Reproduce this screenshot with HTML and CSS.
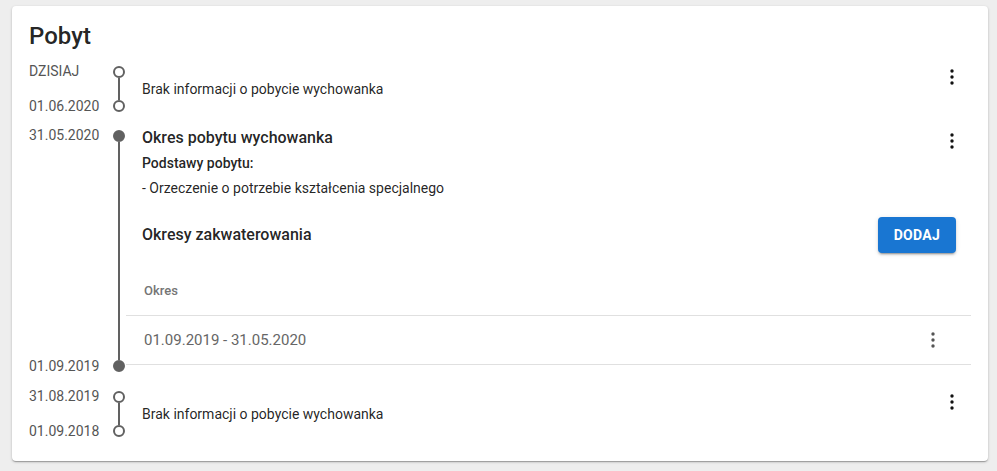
FILE: index.html
```html
<!DOCTYPE html>
<html lang="pl">
<head>
  <meta charset="UTF-8" />
  <meta name="viewport" content="width=device-width, initial-scale=1.0"/>
  <title>Pobyt</title>
  <link rel="stylesheet" href="styles.css">
</head>
<body>
  <div class="card">
    <h1 class="card-title">Pobyt</h1>

    <!-- brak informacji: dzisiaj - 01.06.2020 -->
    <div class="entry">
      <div class="dates">
        <span>DZISIAJ</span>
        <span>01.06.2020</span>
      </div>
      <div class="rail">
        <span class="dot"></span>
        <span class="line"></span>
        <span class="dot"></span>
      </div>
      <div class="content empty">
        <span class="empty-text">Brak informacji o pobycie wychowanka</span>
        <button class="kebab">
          <svg viewBox="0 0 24 24" width="24" height="24"><circle cx="12" cy="6" r="1.7"/><circle cx="12" cy="12" r="1.7"/><circle cx="12" cy="18" r="1.7"/></svg>
        </button>
      </div>
    </div>

    <!-- okres pobytu -->
    <div class="entry stay-entry">
      <div class="dates">
        <span>31.05.2020</span>
        <span>01.09.2019</span>
      </div>
      <div class="rail">
        <span class="dot filled"></span>
        <span class="line"></span>
        <span class="dot filled"></span>
      </div>
      <div class="content stay">
        <div class="stay-head">
          <div class="stay-info">
            <h3 class="stay-title">Okres pobytu wychowanka</h3>
            <div class="stay-label">Podstawy pobytu:</div>
            <div class="stay-text">- Orzeczenie o potrzebie kształcenia specjalnego</div>
          </div>
          <button class="kebab">
            <svg viewBox="0 0 24 24" width="24" height="24"><circle cx="12" cy="6" r="1.7"/><circle cx="12" cy="12" r="1.7"/><circle cx="12" cy="18" r="1.7"/></svg>
          </button>
        </div>

        <div class="toolbar">
          <h4>Okresy zakwaterowania</h4>
          <button class="btn-add">Dodaj</button>
        </div>

        <table class="periods">
          <thead>
            <tr><th>Okres</th><th></th></tr>
          </thead>
          <tbody>
            <tr>
              <td>01.09.2019 - 31.05.2020</td>
              <td class="actions">
                <button class="kebab grey">
                  <svg viewBox="0 0 24 24" width="24" height="24"><circle cx="12" cy="6" r="1.7"/><circle cx="12" cy="12" r="1.7"/><circle cx="12" cy="18" r="1.7"/></svg>
                </button>
              </td>
            </tr>
          </tbody>
        </table>
      </div>
    </div>

    <!-- brak informacji: 31.08.2019 - 01.09.2018 -->
    <div class="entry">
      <div class="dates">
        <span>31.08.2019</span>
        <span>01.09.2018</span>
      </div>
      <div class="rail">
        <span class="dot"></span>
        <span class="line"></span>
        <span class="dot"></span>
      </div>
      <div class="content empty">
        <span class="empty-text">Brak informacji o pobycie wychowanka</span>
        <button class="kebab">
          <svg viewBox="0 0 24 24" width="24" height="24"><circle cx="12" cy="6" r="1.7"/><circle cx="12" cy="12" r="1.7"/><circle cx="12" cy="18" r="1.7"/></svg>
        </button>
      </div>
    </div>
  </div>
</body>
</html>
```

FILE: styles.css
```css
body {
  margin: 0;
  padding: 6px 9px 10px 12px;
  font-family: Roboto, 'Liberation Sans', sans-serif;
  background: #eeeeee;
  color: rgba(0, 0, 0, 0.87);
}

.card {
  background: #fff;
  border-radius: 4px;
  box-shadow: 0 1px 3px rgba(0, 0, 0, 0.2), 0 1px 1px rgba(0, 0, 0, 0.14), 0 2px 1px -1px rgba(0, 0, 0, 0.12);
  padding: 14px 17px 24px 17px;
  height: 455px;
  box-sizing: border-box;
}

.card-title {
  margin: 0 0 14px;
  font-size: 24px;
  font-weight: 500;
  line-height: 32px;
}

.entry {
  display: flex;
  margin-bottom: 18px;
}

.entry.stay-entry {
  margin-bottom: 19px;
}

.entry:last-child {
  margin-bottom: 0;
}

.dates {
  width: 84px;
  flex-shrink: 0;
  display: flex;
  flex-direction: column;
  justify-content: space-between;
  font-size: 14px;
  line-height: 12px;
  color: #555;
}

.dates span {
  margin-top: -1px;
}

.rail {
  width: 12px;
  flex-shrink: 0;
  display: flex;
  flex-direction: column;
  align-items: center;
}

.dot {
  width: 12px;
  height: 12px;
  box-sizing: border-box;
  border: 2px solid #616161;
  border-radius: 50%;
  background: #fff;
}

.dot.filled {
  background: #616161;
}

.line {
  flex: 1;
  width: 2px;
  background: #616161;
  min-height: 22px;
}

.content {
  flex: 1;
  margin-left: 1px;
}

.content.stay {
  padding-bottom: 7px;
}

.content.empty {
  display: flex;
  align-items: center;
  justify-content: space-between;
  padding-left: 16px;
}

.empty-text {
  font-size: 14px;
}

.kebab {
  background: none;
  border: none;
  padding: 0;
  width: 24px;
  height: 24px;
  margin-right: 7px;
  cursor: pointer;
  fill: #111;
}

.content.empty .kebab {
  align-self: flex-start;
  margin-top: -1px;
}

.kebab.grey {
  fill: #555;
  margin-right: 0;
}

.stay-head {
  display: flex;
  justify-content: space-between;
  align-items: flex-start;
  padding-left: 16px;
}

.stay-title {
  margin: -2px 0 0;
  font-size: 16px;
  font-weight: 500;
  line-height: 20px;
}

.stay-label {
  margin-top: 5px;
  font-size: 14px;
  font-weight: 500;
  line-height: 20px;
}

.stay-text {
  margin-top: 5px;
  font-size: 14px;
  line-height: 20px;
}

.stay-head .kebab {
  margin-top: -1px;
}

.toolbar {
  display: flex;
  align-items: center;
  justify-content: space-between;
  height: 60px;
  margin-top: 7px;
  padding-left: 16px;
  padding-right: 15px;
}

.toolbar h4 {
  margin: 0;
  font-size: 16px;
  font-weight: 500;
  line-height: 20px;
}

.btn-add {
  background: #1976d2;
  color: #fff;
  border: none;
  border-radius: 4px;
  height: 36px;
  padding: 0 16px;
  font-family: inherit;
  font-size: 14px;
  font-weight: 700;
  text-transform: uppercase;
  letter-spacing: 0.02em;
  box-shadow: 0 3px 1px -2px rgba(0, 0, 0, 0.2), 0 2px 2px rgba(0, 0, 0, 0.14), 0 1px 5px rgba(0, 0, 0, 0.12);
  cursor: pointer;
}

.periods {
  width: 100%;
  border-collapse: collapse;
}

.periods th {
  height: 50px;
  padding: 0 18px;
  text-align: left;
  font-size: 13px;
  font-weight: 500;
  color: #757575;
  border-bottom: 1px solid #e0e0e0;
}

.periods td {
  height: 48px;
  padding: 0 18px;
  font-size: 15px;
  color: #666;
  border-bottom: 1px solid #e0e0e0;
}

.periods td.actions {
  text-align: right;
  padding-right: 26px;
  width: 24px;
}

.periods td.actions .kebab {
  display: block;
  margin-left: auto;
}
```
